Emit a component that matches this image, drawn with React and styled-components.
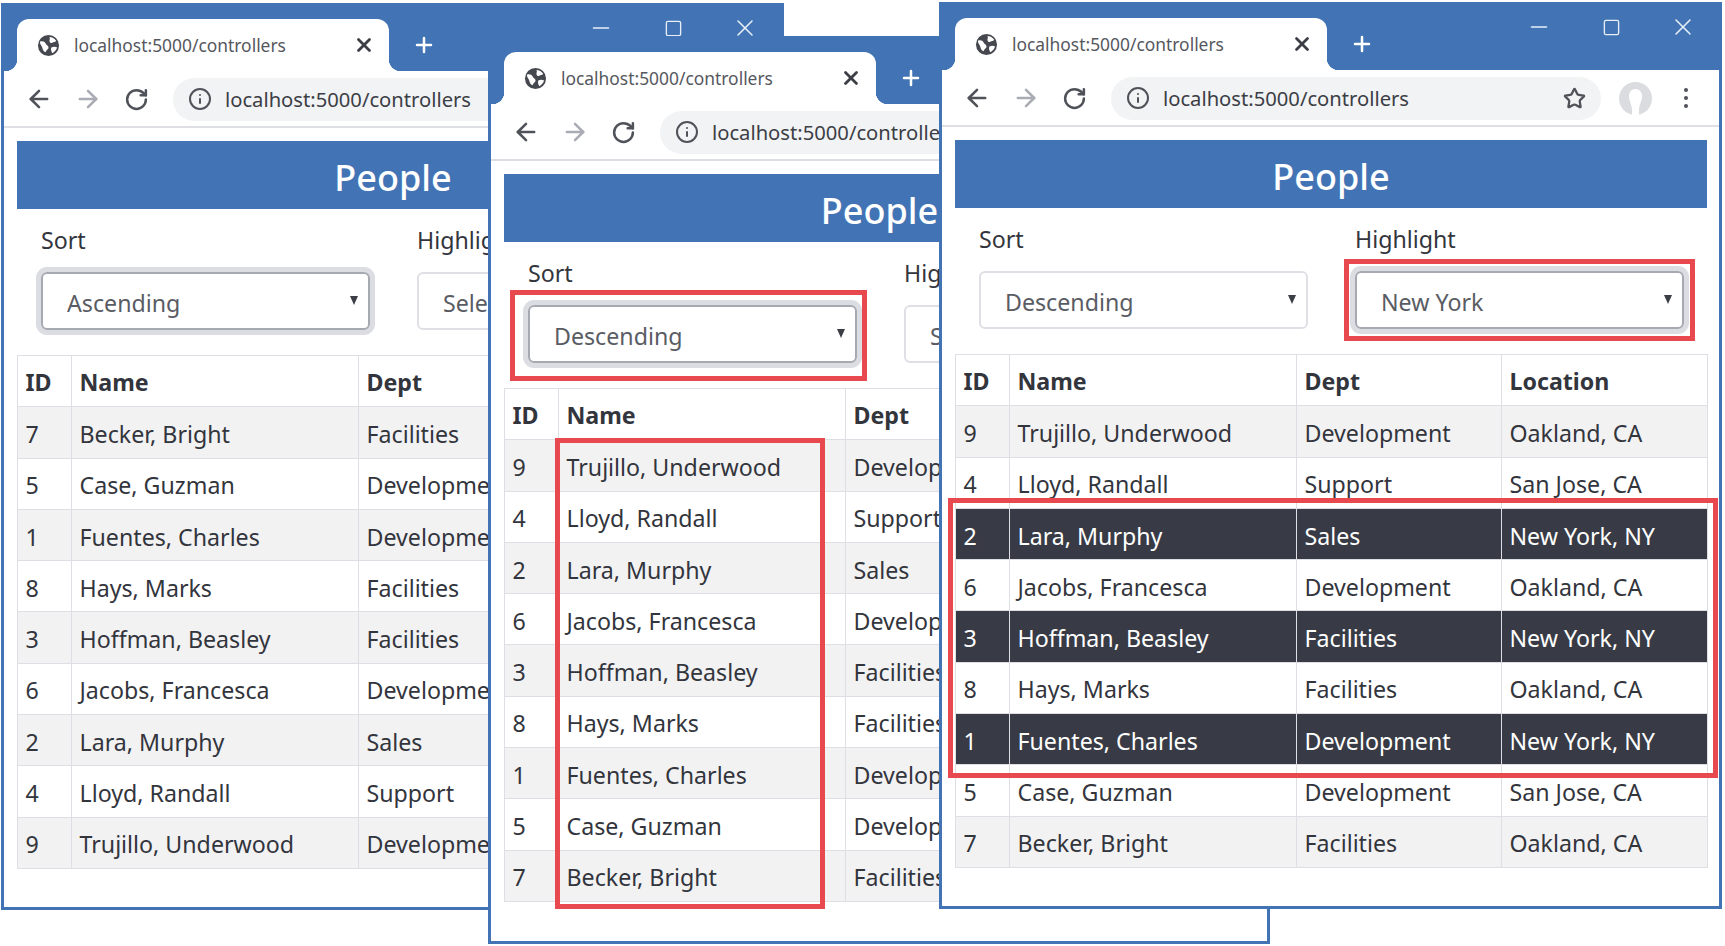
import React from "react";
import styled, { createGlobalStyle } from "styled-components";
import { ArrowLeft, ArrowRight, RotateCw, Info, Star, X, Plus, Minus, Square } from "lucide-react";

const BLUE = "#4274b5";
const FONT = `"Noto Sans", "Liberation Sans", Arial, sans-serif`;

const people = {
  7: ["Becker, Bright", "Facilities", "Oakland, CA"],
  5: ["Case, Guzman", "Development", "San Jose, CA"],
  1: ["Fuentes, Charles", "Development", "New York, NY"],
  8: ["Hays, Marks", "Facilities", "Oakland, CA"],
  3: ["Hoffman, Beasley", "Facilities", "New York, NY"],
  6: ["Jacobs, Francesca", "Development", "Oakland, CA"],
  2: ["Lara, Murphy", "Sales", "New York, NY"],
  4: ["Lloyd, Randall", "Support", "San Jose, CA"],
  9: ["Trujillo, Underwood", "Development", "Oakland, CA"],
};

const ascending = [7, 5, 1, 8, 3, 6, 2, 4, 9];
const descending = [9, 4, 2, 6, 3, 8, 1, 5, 7];

const GlobalStyle = createGlobalStyle`
  html, body {
    margin: 0;
    padding: 0;
    background: #fff;
  }
  body {
    font-family: ${FONT};
    color: #33353d;
  }
`;

const Canvas = styled.div`
  position: relative;
  width: 1725px;
  height: 946px;
  overflow: hidden;
  background: #fff;
`;

const Frame = styled.section`
  position: absolute;
  left: ${(p) => p.$x}px;
  top: ${(p) => p.$y}px;
  width: ${(p) => p.$w}px;
  height: ${(p) => p.$h}px;
  box-sizing: border-box;
  border: 3px solid ${BLUE};
  background: #fff;
  overflow: hidden;
`;

const TitleBar = styled.div`
  display: flex;
  align-items: flex-end;
  height: 65px;
  padding-left: 13px;
  background: ${BLUE};
`;

const Tab = styled.div`
  position: relative;
  display: flex;
  align-items: center;
  box-sizing: border-box;
  width: 372px;
  height: 52px;
  padding: 0 14px 0 20px;
  background: #fff;
  border-radius: 12px 12px 0 0;

  &::before,
  &::after {
    content: "";
    position: absolute;
    bottom: 0;
    width: 12px;
    height: 12px;
  }
  &::before {
    left: -12px;
    background: radial-gradient(circle at 0 0, transparent 12px, #fff 12.5px);
  }
  &::after {
    right: -12px;
    background: radial-gradient(circle at 100% 0, transparent 12px, #fff 12.5px);
  }
`;

const TabTitle = styled.span`
  flex: 1;
  margin-left: 14px;
  font-size: 17.4px;
  white-space: nowrap;
  color: #55575e;
`;

const NewTab = styled.div`
  display: flex;
  margin: 0 0 14px 23px;
  color: #fff;
`;

const WindowControls = styled.div`
  display: flex;
  margin-left: auto;
  align-self: flex-start;
`;

const WindowButton = styled.div`
  display: flex;
  align-items: center;
  justify-content: center;
  width: 72px;
  height: 44px;
  color: #e8eef7;
`;

const Toolbar = styled.div`
  display: flex;
  align-items: center;
  box-sizing: border-box;
  height: 57px;
  padding: 1px 21px 0 10px;
  border-bottom: 2px solid #dedfe5;
`;

const NavButton = styled.div`
  display: flex;
  justify-content: center;
  width: 49px;
  color: ${(p) => (p.$disabled ? "#a9acb4" : "#50525a")};
`;

const Omnibox = styled.div`
  display: flex;
  flex: 1;
  align-items: center;
  height: 43px;
  margin-left: 12px;
  padding: 0 15px;
  background: #f1f3f4;
  border-radius: 22px;
  color: #50525a;
`;

const Url = styled.span`
  flex: 1;
  margin-left: 13px;
  font-size: 20.2px;
  white-space: nowrap;
  color: #3c3e46;
`;

const Avatar = styled.svg`
  flex: none;
  width: 33px;
  height: 33px;
  margin-left: 18px;
`;

const MenuDots = styled.div`
  display: flex;
  flex: none;
  flex-direction: column;
  align-items: center;
  gap: 4px;
  width: 24px;
  margin-left: 22px;

  i {
    width: 4px;
    height: 4px;
    border-radius: 50%;
    background: #50525a;
  }
`;

const Page = styled.div`
  padding: 13px 12px 0 13px;
`;

const Heading = styled.h3`
  margin: 0;
  height: 68px;
  font-size: 36px;
  font-weight: 500;
  line-height: 73px;
  text-align: center;
  color: #fff;
  background: ${BLUE};
`;

const FormRow = styled.div`
  display: grid;
  grid-template-columns: 329px 329px;
  gap: 47px;
  margin: 15px 24px 25px;
`;

const Label = styled.label`
  display: block;
  margin-bottom: 16px;
  font-size: 23.2px;
  line-height: 32px;
  white-space: nowrap;
`;

const SelectBox = styled.div`
  position: relative;
  box-sizing: border-box;
  height: 58px;
  border: 2px solid ${(p) => (p.$focused ? "#a7a9b2" : "#dfe0e6")};
  border-radius: 6px;
  box-shadow: ${(p) => (p.$focused ? "0 0 0 5px #dcdde3" : "none")};

  &::after {
    content: "";
    position: absolute;
    top: 22px;
    right: 10px;
    border-style: solid;
    border-width: 9px 4.5px 0;
    border-color: #3c3e46 transparent transparent;
  }
`;

const Select = styled.select`
  appearance: none;
  width: 100%;
  height: 100%;
  padding: 3px 0 0 24px;
  border: 0;
  outline: 0;
  background: transparent;
  font-family: ${FONT};
  font-size: 23.2px;
  color: #5a5c64;
`;

const Table = styled.table`
  width: 752px;
  table-layout: fixed;
  border-collapse: collapse;
  font-size: 23.2px;
`;

const Head = styled.th`
  box-sizing: border-box;
  height: 51.3px;
  padding: 1px 7.5px 0;
  border: 1.5px solid #dedfe5;
  font-weight: 700;
  text-align: left;
  white-space: nowrap;
`;

const Row = styled.tr`
  background: ${(p) => (p.$highlight ? "#383b45" : p.$striped ? "#f2f2f3" : "#fff")};
  color: ${(p) => (p.$highlight ? "#fff" : "inherit")};
`;

const Cell = styled.td`
  box-sizing: border-box;
  height: 51.3px;
  padding: 3px 7.5px 0;
  border: 1.5px solid #dedfe5;
  white-space: nowrap;
`;

const Callout = styled.div`
  position: absolute;
  left: ${(p) => p.$x}px;
  top: ${(p) => p.$y}px;
  width: ${(p) => p.$w}px;
  height: ${(p) => p.$h}px;
  box-sizing: border-box;
  border: 5px solid #e8494f;
`;

function GlobeIcon() {
  return (
    <svg width="23" height="23" viewBox="0 0 24 24" style={{ flex: "none" }}>
      <circle cx="12" cy="12" r="11" fill="#46484f" />
      <path d="M3 8c3-1 5 0 6 2s3 2 3 4-2 2-3 5c-3-1-3-4-4-6S3 10 3 8z" fill="#fff" />
      <path d="M13 3c2 0 5 1 7 4-1 2-3 1-4 2s-3 0-3-2 1-2 0-4z" fill="#fff" />
      <path d="M15 14c2-1 4-1 6 0-1 3-3 5-5 6-1-2-2-4-1-6z" fill="#fff" />
    </svg>
  );
}

function BrowserWindow({ x, y, w, h, order, sort, highlight, focus, covered }) {
  return (
    <Frame $x={x} $y={y} $w={w} $h={h}>
      <TitleBar>
        <Tab>
          <GlobeIcon />
          <TabTitle>localhost:5000/controllers</TabTitle>
          <X size={22} strokeWidth={3} color="#3c3e46" />
        </Tab>
        <NewTab>
          <Plus size={24} strokeWidth={2.5} />
        </NewTab>
        <WindowControls>
          <WindowButton><Minus size={26} strokeWidth={1.2} /></WindowButton>
          <WindowButton><Square size={19} strokeWidth={1.7} /></WindowButton>
          <WindowButton><X size={28} strokeWidth={1.3} /></WindowButton>
        </WindowControls>
      </TitleBar>
      <Toolbar>
        <NavButton><ArrowLeft size={28} strokeWidth={2.2} /></NavButton>
        <NavButton $disabled><ArrowRight size={28} strokeWidth={2.2} /></NavButton>
        <NavButton><RotateCw size={25} strokeWidth={2.4} /></NavButton>
        <Omnibox>
          <Info size={24} strokeWidth={2} />
          <Url>localhost:5000/controllers</Url>
          {!covered && <Star size={23} strokeWidth={2.4} />}
        </Omnibox>
        <Avatar viewBox="0 0 33 33">
          <circle cx="16.5" cy="16.5" r="16.5" fill="#dadce0" />
          <path d="M16.5 7c4 0 6.5 3 6.5 7.5S20.500 22 20 27v6h-7v-6c-.5-5-3-8-3-12.500S12.500 7 16.500 7z" fill="#fff" />
        </Avatar>
        <MenuDots><i /><i /><i /></MenuDots>
      </Toolbar>
      <Page>
        <Heading>People</Heading>
        <FormRow>
          <div>
            <Label>Sort</Label>
            <SelectBox $focused={focus === "sort"}>
              <Select defaultValue={sort}>
                <option>Ascending</option>
                <option>Descending</option>
              </Select>
            </SelectBox>
          </div>
          <div>
            <Label>Highlight</Label>
            <SelectBox $focused={focus === "highlight"}>
              <Select defaultValue={highlight}>
                <option>Select a Location</option>
                <option>New York</option>
                <option>Oakland</option>
                <option>San Jose</option>
              </Select>
            </SelectBox>
          </div>
        </FormRow>
        <Table>
          <colgroup>
            <col width="54" />
            <col width="287" />
            <col width="205" />
            <col width="206" />
          </colgroup>
          <thead>
            <tr>
              <Head>ID</Head>
              <Head>Name</Head>
              <Head>Dept</Head>
              {covered ? <Head /> : <Head>Location</Head>}
            </tr>
          </thead>
          <tbody>
            {order.map((id, i) => {
              const [name, dept, location] = people[id];
              const lit = highlight === "New York" && location === "New York, NY";
              return (
                <Row key={id} $striped={i % 2 === 0} $highlight={lit}>
                  <Cell>{id}</Cell>
                  <Cell>{name}</Cell>
                  <Cell>{dept}</Cell>
                  {covered ? <Cell /> : <Cell>{location}</Cell>}
                </Row>
              );
            })}
          </tbody>
        </Table>
      </Page>
    </Frame>
  );
}

export default function App() {
  return (
    <Canvas>
      <GlobalStyle />
      <BrowserWindow x={1} y={3} w={783} h={907} order={ascending} sort="Ascending" highlight="Select a Location" focus="sort" covered />
      <BrowserWindow x={488} y={36} w={782} h={908} order={descending} sort="Descending" highlight="Select a Location" focus="sort" covered />
      <Callout $x={510} $y={290} $w={357} $h={91} />
      <Callout $x={555} $y={438} $w={270} $h={471} />
      <BrowserWindow x={939} y={2} w={783} h={907} order={descending} sort="Descending" highlight="New York" focus="highlight" />
      <Callout $x={1344} $y={259} $w={351} $h={82} />
      <Callout $x={948} $y={498} $w={770} $h={280} />
    </Canvas>
  );
}
